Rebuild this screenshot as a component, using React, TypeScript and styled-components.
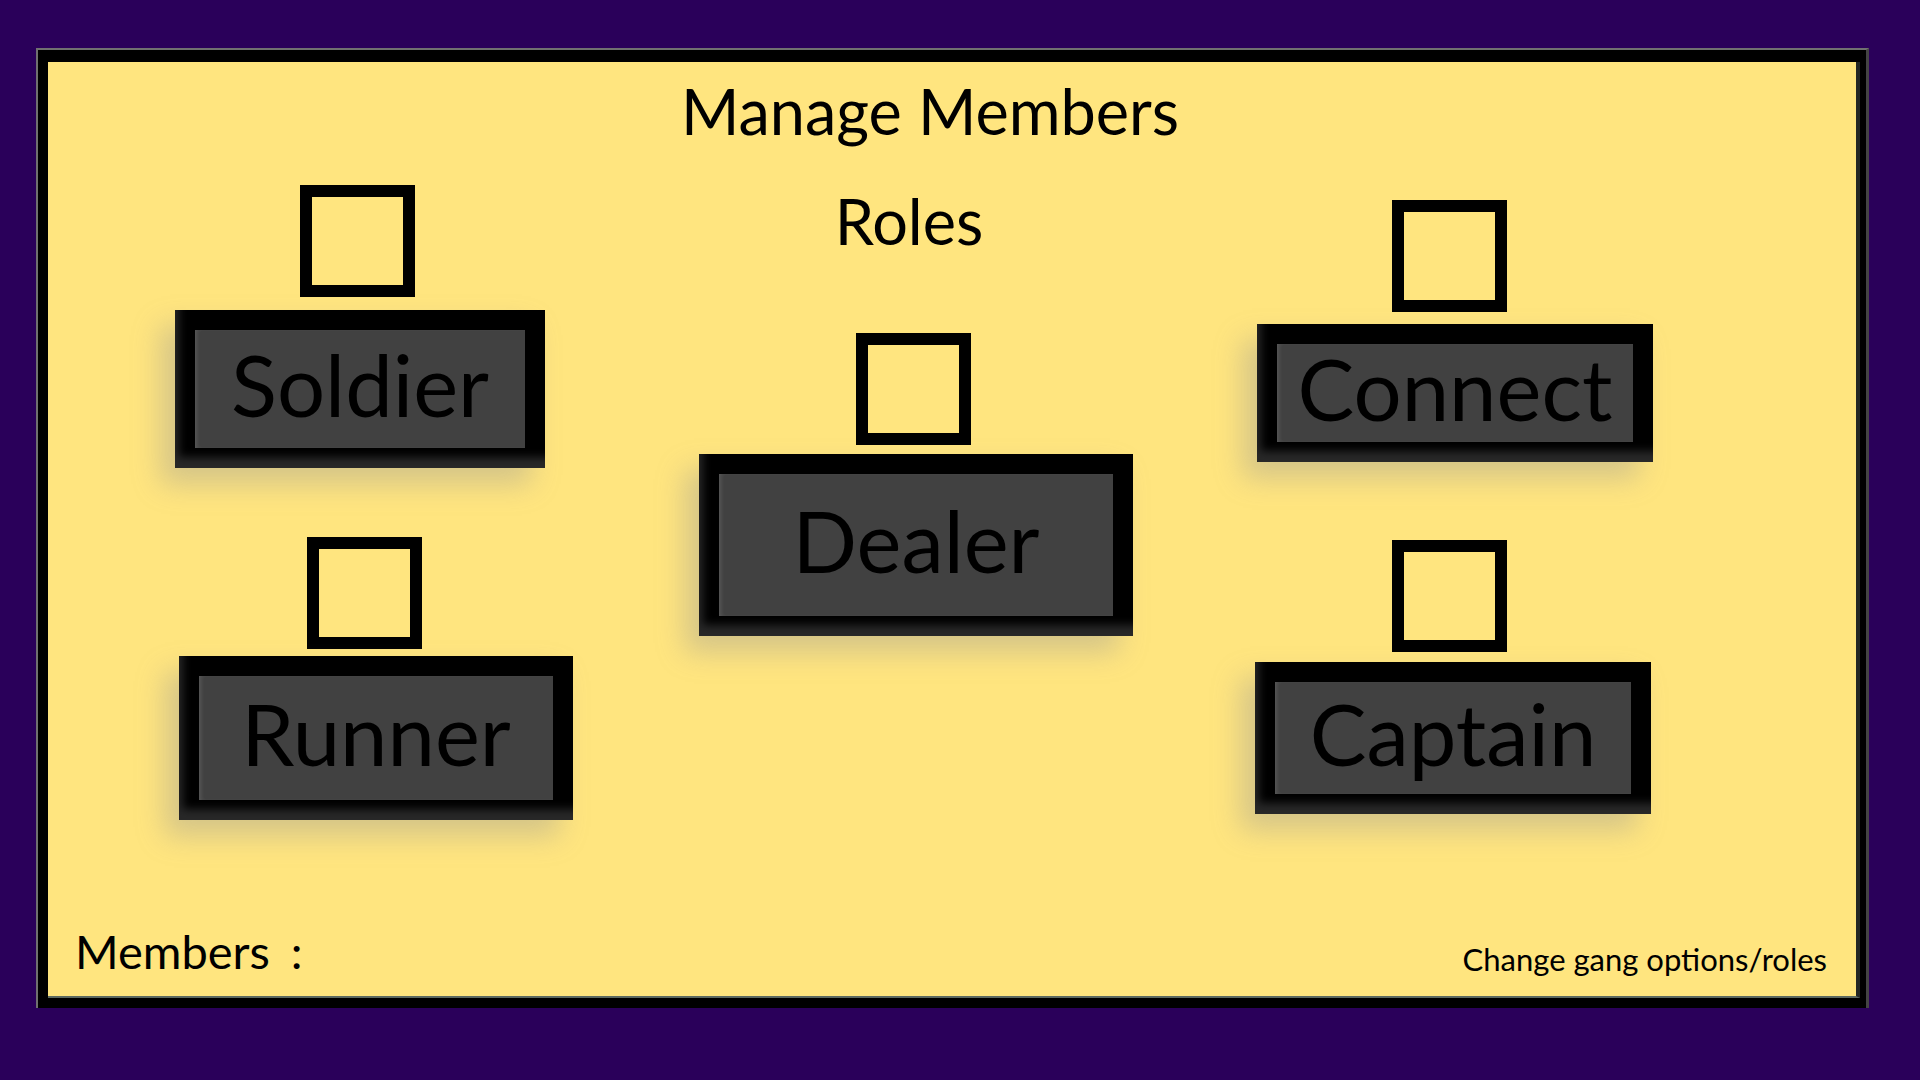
import React from "react";
import styled, { createGlobalStyle } from "styled-components";

const GlobalStyle = createGlobalStyle`
  html, body {
    margin: 0;
    padding: 0;
    background: #2a005a;
  }
  body {
    width: 1920px;
    height: 1080px;
    overflow: hidden;
    font-family: Lato, "Open Sans", sans-serif;
    color: #000;
  }
`;

const Screen = styled.div`
  width: 1920px;
  height: 1080px;
  box-sizing: border-box;
  padding: 48px 0 0 36px;
  background: #2a005a;
`;

const Frame = styled.div`
  width: 1833px;
  height: 960px;
  box-sizing: border-box;
  background: #000;
  border-top: 2px solid #707070;
  border-left: 2px solid #707070;
  border-right: 3px solid #444;
  padding: 12px 6px 10px 10px;
  display: flex;
`;

const Panel = styled.div`
  flex: 1;
  box-sizing: border-box;
  background: #ffe57f;
  border-right: 4px solid #222623;
  border-bottom: 2px solid #5c6960;
  display: flex;
  flex-direction: column;
`;

const Board = styled.div`
  flex: 1;
  display: flex;
  padding-left: 127px;
`;

const Column = styled.div<{ $w: number; $gap: number }>`
  width: ${p => p.$w}px;
  margin-right: ${p => p.$gap}px;
  display: flex;
  flex-direction: column;
  align-items: flex-start;
`;

const MiddleColumn = styled(Column)`
  align-items: center;
`;

const Heading = styled.div<{ $top: number; $shift: number }>`
  margin-top: ${p => p.$top}px;
  margin-left: ${p => p.$shift}px;
  font-size: 63px;
  line-height: 1;
  white-space: nowrap;
`;

const RoleBlock = styled.div<{ $top: number; $gap: number }>`
  margin-top: ${p => p.$top}px;
  display: flex;
  flex-direction: column;
  align-items: flex-start;
  gap: ${p => p.$gap}px;
  align-self: stretch;
`;

const CheckBox = styled.div<{ $offset: number }>`
  width: 115px;
  height: 112px;
  box-sizing: border-box;
  margin-left: ${p => p.$offset}px;
  border: 12px solid #000;
  cursor: pointer;
`;

const RoleButton = styled.div<{ $offset: number; $w: number; $h: number }>`
  width: ${p => p.$w}px;
  height: ${p => p.$h}px;
  margin-left: ${p => p.$offset}px;
  box-sizing: border-box;
  padding: 20px;
  background: #000;
  display: flex;
  box-shadow:
    inset 7px -14px 8px -3px #282828,
    -14px 16px 26px rgba(150, 150, 150, 0.4);
`;

const RoleFace = styled.div`
  flex: 1;
  background: #414141;
  box-shadow: inset 4px 0 4px -2px #595959;
  display: flex;
  align-items: center;
  justify-content: center;
  padding-bottom: 9px;
  font-size: 85px;
  line-height: 1;
  color: #000;
  white-space: nowrap;
`;

const Footer = styled.div`
  display: flex;
  justify-content: space-between;
  align-items: flex-end;
  padding: 0 29px 18px 27px;
`;

const MembersLabel = styled.div`
  font-size: 47px;
  line-height: 1;
  word-spacing: 9px;
  margin-bottom: 3px;
`;

const OptionsLink = styled.div`
  font-size: 31px;
  line-height: 1;
  margin-bottom: 3px;
  cursor: pointer;
`;

type Role = {
  name: string;
  top: number;
  gap: number;
  cb: number;
  btn: number;
  w: number;
  h: number;
};

const leftRoles: Role[] = [
  { name: "Soldier", top: 123, gap: 13, cb: 125, btn: 0, w: 370, h: 158 },
  { name: "Runner", top: 69, gap: 7, cb: 132, btn: 4, w: 394, h: 164 },
];

const rightRoles: Role[] = [
  { name: "Connect", top: 138, gap: 12, cb: 137, btn: 2, w: 396, h: 138 },
  { name: "Captain", top: 78, gap: 10, cb: 137, btn: 0, w: 396, h: 152 },
];

const dealer: Role = { name: "Dealer", top: 81, gap: 9, cb: 157, btn: 0, w: 434, h: 182 };

const RoleItem = ({ role }: { role: Role }) => (
  <RoleBlock $top={role.top} $gap={role.gap}>
    <CheckBox $offset={role.cb} role="checkbox" aria-checked={false} />
    <RoleButton $offset={role.btn} $w={role.w} $h={role.h}>
      <RoleFace>{role.name}</RoleFace>
    </RoleButton>
  </RoleBlock>
);

export default function App() {
  return (
    <>
      <GlobalStyle />
      <Screen>
        <Frame>
          <Panel>
            <Board>
              <Column $w={398} $gap={126}>
                {leftRoles.map(r => (
                  <RoleItem key={r.name} role={r} />
                ))}
              </Column>
              <MiddleColumn $w={434} $gap={122}>
                <Heading $top={17} $shift={28}>Manage Members</Heading>
                <Heading $top={47} $shift={-14}>Roles</Heading>
                <RoleItem role={dealer} />
              </MiddleColumn>
              <Column $w={398} $gap={0}>
                {rightRoles.map(r => (
                  <RoleItem key={r.name} role={r} />
                ))}
              </Column>
            </Board>
            <Footer>
              <MembersLabel>Members :</MembersLabel>
              <OptionsLink>Change gang options/roles</OptionsLink>
            </Footer>
          </Panel>
        </Frame>
      </Screen>
    </>
  );
}
